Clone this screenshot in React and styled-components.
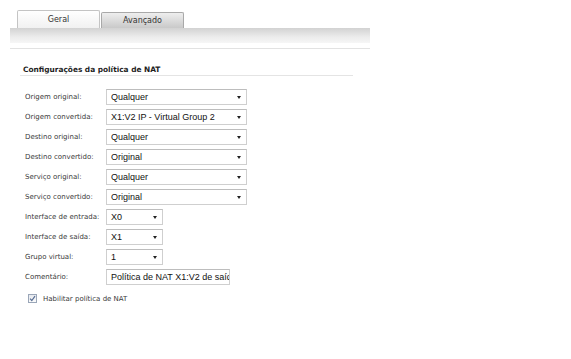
import styled, { createGlobalStyle } from "styled-components";

const Global = createGlobalStyle`
  html, body { margin: 0; padding: 0; background: #fff; }
  body { font-family: "DejaVu Sans", Verdana, sans-serif; }
`;

const Page = styled.div`
  width: 571px;
  height: 359px;
  overflow: hidden;
  background: #fff;
`;

const TabRow = styled.div`
  display: flex;
  align-items: flex-end;
  margin-top: 10px;
  padding-left: 17px;
  height: 18px;
`;

const Tab = styled.div`
  width: 83px;
  height: ${(p) => (p.active ? "18px" : "16px")};
  box-sizing: border-box;
  border: 1px solid ${(p) => (p.active ? "#c4c4c4" : "#a9a9a9")};
  border-bottom: none;
  border-radius: 2px 2px 0 0;
  margin-right: 1px;
  background: ${(p) =>
    p.active
      ? "linear-gradient(#ffffff, #f1f1f1)"
      : "linear-gradient(#eeeeee, #c9c9c9)"};
  display: flex;
  align-items: center;
  justify-content: center;
  font-family: "DejaVu Sans", sans-serif;
  font-size: 8px;
  color: #333;
`;

const Bar = styled.div`
  margin-left: 10px;
  width: 360px;
  height: 15px;
  background: linear-gradient(#d2d2d2, #ececec 60%, #f6f6f6);
`;

const Rule = styled.div`
  margin: 5px 0 0 10px;
  width: 360px;
  height: 1px;
  background: #e2e2e2;
`;

const Section = styled.div`
  padding: 16px 0 0 20px;
`;

const Heading = styled.div`
  width: 330px;
  padding: 0 0 1px 3px;
  line-height: 9px;
  border-bottom: 1px solid #e4e4e4;
  font-family: "DejaVu Sans", sans-serif;
  font-weight: bold;
  font-size: 7.4px;
  color: #1d1d1d;
`;

const Form = styled.div`
  display: flex;
  flex-direction: column;
  gap: 4px;
  padding: 13px 0 0 5px;
`;

const Row = styled.div`
  display: flex;
  align-items: center;
  height: 16px;
`;

const Label = styled.div`
  width: 81px;
  font-family: "DejaVu Sans", sans-serif;
  font-size: 7px;
  color: #3a3a3a;
`;

const Field = styled.div`
  box-sizing: border-box;
  width: ${(p) => p.w}px;
  height: 16px;
  border: 1px solid #cfcfcf;
  border-top-color: #bdbdbd;
  background: #fff;
  display: flex;
  align-items: center;
  justify-content: space-between;
  padding: 0 5px 0 4px;
  font-family: "Liberation Sans", Arial, sans-serif;
  font-size: 9px;
  color: #111;
  white-space: nowrap;
  overflow: hidden;
`;

const TextInput = styled.input`
  box-sizing: border-box;
  width: 124px;
  height: 16px;
  margin: 0;
  border: 1px solid #cfcfcf;
  border-top-color: #bdbdbd;
  padding: 0 0 0 4px;
  font-family: "Liberation Sans", Arial, sans-serif;
  font-size: 9px;
  color: #111;
  outline: none;
`;

const Arrow = styled.span`
  width: 0;
  height: 0;
  border-left: 2.5px solid transparent;
  border-right: 2.5px solid transparent;
  border-top: 3px solid #222;
`;

const CheckRow = styled.div`
  display: flex;
  align-items: center;
  gap: 6px;
  padding: 9px 0 0 8px;
  font-family: "DejaVu Sans", sans-serif;
  font-size: 7px;
  color: #3a3a3a;
`;

const Box = styled.span`
  box-sizing: border-box;
  width: 9px;
  height: 9px;
  border: 1px solid #9aa6b8;
  background: linear-gradient(#e6e9ee, #fbfbfb);
  display: flex;
  align-items: center;
  justify-content: center;
`;

const rows = [
  ["Origem original:", "Qualquer", 141],
  ["Origem convertida:", "X1:V2 IP - Virtual Group 2", 141],
  ["Destino original:", "Qualquer", 141],
  ["Destino convertido:", "Original", 141],
  ["Serviço original:", "Qualquer", 141],
  ["Serviço convertido:", "Original", 141],
  ["Interface de entrada:", "X0", 57],
  ["Interface de saída:", "X1", 57],
  ["Grupo virtual:", "1", 57],
];

export default function App() {
  return (
    <Page>
      <Global />
      <TabRow>
        <Tab active>Geral</Tab>
        <Tab>Avançado</Tab>
      </TabRow>
      <Bar />
      <Rule />
      <Section>
        <Heading>Configurações da política de NAT</Heading>
        <Form>
          {rows.map(([label, value, w]) => (
            <Row key={label}>
              <Label>{label}</Label>
              <Field w={w}>
                {value}
                <Arrow />
              </Field>
            </Row>
          ))}
          <Row>
            <Label>Comentário:</Label>
            <TextInput readOnly value="Política de NAT X1:V2 de saída" />
          </Row>
        </Form>
        <CheckRow>
          <Box>
            <svg width="7" height="7" viewBox="0 0 7 7">
              <path d="M1 3.6 L2.8 5.5 L6 1.2" fill="none" stroke="#5a6f95" strokeWidth="1.2" />
            </svg>
          </Box>
          Habilitar política de NAT
        </CheckRow>
      </Section>
    </Page>
  );
}
